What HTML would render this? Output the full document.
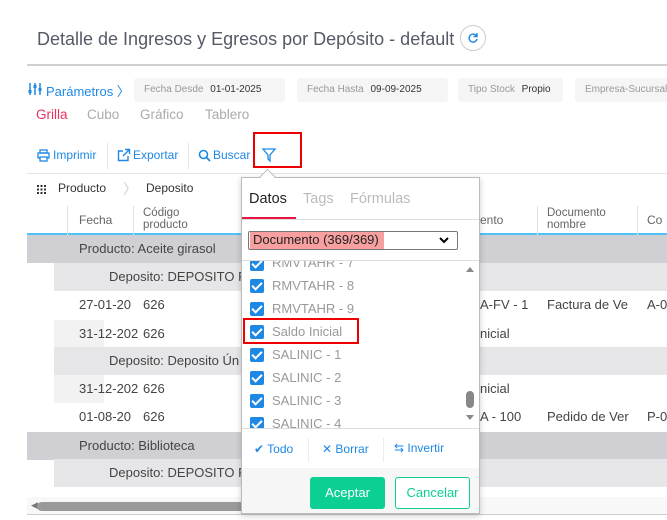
<!DOCTYPE html>
<html><head><meta charset="utf-8"><style>
*{box-sizing:border-box;margin:0;padding:0}
html,body{width:667px;height:520px;overflow:hidden}
body{background:#fff;font-family:"Liberation Sans",sans-serif;position:relative;color:#333}
.a{position:absolute;white-space:nowrap}
.box{position:absolute;background:#f5f5f6;border-radius:3px;top:78px;height:24px;font-size:10px;line-height:24px;padding-left:10px;color:#999;white-space:nowrap;overflow:hidden}
.box b{font-weight:normal;color:#333;margin-left:4px}
.tb{color:#1e88e5;font-size:12px;top:148px}
.row{position:absolute;left:27px;right:0;height:28px;font-size:13px;line-height:28px;color:#444;overflow:hidden}
.cb{position:absolute;left:8px;width:14px;height:14px;background:#1e88e5;border-radius:2px}
.cb:after{content:"";position:absolute;left:4px;top:1px;width:4px;height:8px;border:solid #fff;border-width:0 2px 2px 0;transform:rotate(45deg)}
.it{position:absolute;left:30px;font-size:13px;color:#999}
</style></head><body>
<div class="a" style="left:37px;top:29px;font-size:18px;color:#555a66">Detalle de Ingresos y Egresos por Depósito - default</div>
<div class="a" style="left:460px;top:25px;width:26px;height:26px;border:1px solid #ccc;border-radius:50%"></div>
<svg class="a" style="left:467px;top:32px" width="12" height="12"><path d="M9.5 4A4 4 0 1 0 10 7" fill="none" stroke="#1e88e5" stroke-width="1.4"/><path d="M10 1v3.5H6.5" fill="none" stroke="#1e88e5" stroke-width="1.4"/></svg>
<div class="a" style="left:27px;right:0;top:64px;height:2px;background:#d0d0d4"></div>
<svg class="a" style="left:28px;top:82px" width="14" height="14"><path d="M2 1v12M7 1v12M12 1v12" stroke="#1e88e5" stroke-width="1.5"/><rect x="0.5" y="8" width="3" height="3" fill="#1e88e5"/><rect x="5.5" y="3" width="3" height="3" fill="#1e88e5"/><rect x="10.5" y="6" width="3" height="3" fill="#1e88e5"/></svg>
<div class="a" style="left:46px;top:81px;font-size:13px;color:#1e88e5">Parámetros 〉</div>
<div class="box" style="left:134px;width:151px">Fecha Desde <b>01-01-2025</b></div>
<div class="box" style="left:297px;width:151px">Fecha Hasta <b>09-09-2025</b></div>
<div class="box" style="left:458px;width:105px">Tipo Stock <b>Propio</b></div>
<div class="box" style="left:575px;width:100px">Empresa-Sucursal</div>
<div class="a" style="left:36px;top:107px;font-size:13.5px;color:#e8335f">Grilla</div>
<div class="a" style="left:87px;top:107px;font-size:13.5px;color:#aaa">Cubo</div>
<div class="a" style="left:140px;top:107px;font-size:13.5px;color:#aaa">Gráfico</div>
<div class="a" style="left:205px;top:107px;font-size:13.5px;color:#aaa">Tablero</div>
<svg class="a" style="left:37px;top:149px" width="13" height="13"><rect x="3" y="1" width="7" height="3" fill="none" stroke="#1e88e5" stroke-width="1.3"/><rect x="1" y="4" width="11" height="5" fill="none" stroke="#1e88e5" stroke-width="1.3"/><rect x="3" y="8" width="7" height="4" fill="#fff" stroke="#1e88e5" stroke-width="1.3"/></svg>
<div class="a tb" style="left:53px">Imprimir</div>
<div class="a" style="left:107px;top:143px;width:1px;height:26px;background:#e4e4e4"></div>
<svg class="a" style="left:117px;top:148px" width="14" height="14"><path d="M6 3H1.5v9.5H11V8" fill="none" stroke="#1e88e5" stroke-width="1.4"/><path d="M6 8L12.5 1.5M8 1.5h4.5V6" fill="none" stroke="#1e88e5" stroke-width="1.4"/></svg>
<div class="a tb" style="left:133px">Exportar</div>
<div class="a" style="left:188px;top:143px;width:1px;height:26px;background:#e4e4e4"></div>
<svg class="a" style="left:198px;top:149px" width="13" height="13"><circle cx="5.5" cy="5.5" r="4" fill="none" stroke="#1e88e5" stroke-width="1.6"/><path d="M8.5 8.5L12 12" stroke="#1e88e5" stroke-width="1.8"/></svg>
<div class="a tb" style="left:213px">Buscar</div>
<svg class="a" style="left:261px;top:147px" width="16" height="16"><path d="M2 2h12l-5 6v6l-2-2V8z" fill="none" stroke="#1e88e5" stroke-width="1.3"/></svg>
<div class="a" style="left:253px;top:132px;width:49px;height:36px;border:2px solid #e00"></div>
<div class="a" style="left:27px;right:0;top:173px;height:1px;background:#e4e4e4"></div>
<svg class="a" style="left:37px;top:185px" width="9" height="9"><g fill="#333"><rect x="0" y="0" width="2" height="2"/><rect x="3.5" y="0" width="2" height="2"/><rect x="7" y="0" width="2" height="2"/><rect x="0" y="3.5" width="2" height="2"/><rect x="3.5" y="3.5" width="2" height="2"/><rect x="7" y="3.5" width="2" height="2"/><rect x="0" y="7" width="2" height="2"/><rect x="3.5" y="7" width="2" height="2"/><rect x="7" y="7" width="2" height="2"/></g></svg>
<div class="a" style="left:58px;top:181px;font-size:12px">Producto</div>
<div class="a" style="left:123px;top:179px;font-size:14px;color:#ccc">〉</div>
<div class="a" style="left:146px;top:181px;font-size:12px">Deposito</div>
<div class="a" style="left:27px;right:0;top:206px;height:29px;border-bottom:2px solid #4fc3f7"></div>
<div class="a" style="left:67px;top:206px;width:1px;height:29px;background:#e0e0e0"></div>
<div class="a" style="left:133px;top:206px;width:1px;height:29px;background:#e0e0e0"></div>
<div class="a" style="left:537px;top:206px;width:1px;height:29px;background:#e0e0e0"></div>
<div class="a" style="left:637px;top:206px;width:1px;height:29px;background:#e0e0e0"></div>
<div class="a" style="left:79px;top:213px;font-size:12px;color:#666">Fecha</div>
<div class="a" style="left:143px;top:207px;font-size:11.5px;color:#666;line-height:12px">Código<br>producto</div>
<div class="a" style="left:480px;top:213px;font-size:12px;color:#666">ento</div>
<div class="a" style="left:547px;top:207px;font-size:11.5px;color:#666;line-height:12px">Documento<br>nombre</div>
<div class="a" style="left:647px;top:213px;font-size:12px;color:#666">Co</div>
<div class="row" style="top:235px;background:#d0d0d4"><span style="margin-left:52px">Producto: Aceite girasol</span></div>
<div class="row" style="top:263px"><div style="margin-left:27px;background:#e6e6e8;padding-left:55px;height:28px">Deposito: DEPOSITO P</div></div>
<div class="row" style="top:291px"><span class="a" style="left:52px">27-01-20</span><span class="a" style="left:116px">626</span><span class="a" style="left:453px">A-FV - 1</span><span class="a" style="left:520px">Factura de Ve</span><span class="a" style="left:620px">A-0</span></div>
<div class="row" style="top:320px;background:linear-gradient(90deg,#fff 27px,#f2f2f3 27px,#f2f2f3 77px,#fff 77px)"><span class="a" style="left:52px">31-12-202</span><span class="a" style="left:116px">626</span><span class="a" style="left:453px">nicial</span></div>
<div class="row" style="top:347px"><div style="margin-left:27px;background:#e6e6e8;padding-left:55px;height:28px">Deposito: Deposito Ún</div></div>
<div class="row" style="top:375px;background:linear-gradient(90deg,#fff 27px,#f2f2f3 27px,#f2f2f3 77px,#fff 77px)"><span class="a" style="left:52px">31-12-202</span><span class="a" style="left:116px">626</span><span class="a" style="left:453px">nicial</span></div>
<div class="row" style="top:403px"><span class="a" style="left:52px">01-08-20</span><span class="a" style="left:116px">626</span><span class="a" style="left:453px">A - 100</span><span class="a" style="left:520px">Pedido de Ver</span><span class="a" style="left:620px">P-0</span></div>
<div class="row" style="top:432px;background:#d0d0d4"><span style="margin-left:52px">Producto: Biblioteca</span></div>
<div class="row" style="top:459px"><div style="margin-left:27px;background:#e6e6e8;padding-left:55px;height:28px">Deposito: DEPOSITO P</div></div>
<div class="a" style="left:27px;right:0;top:497px;height:17px;background:#f8f8f8"></div>
<div class="a" style="left:31px;top:500px;font-size:9px;color:#777">◀</div>
<div class="a" style="left:37px;top:502px;width:412px;height:9px;border-radius:5px;background:#999"></div>
<div class="a" style="left:27px;right:0;top:514px;height:1px;background:#ccc"></div>
<div class="a" style="left:241px;top:177px;width:239px;height:337px;background:#fff;border:1px solid #bbb;box-shadow:0 2px 6px rgba(0,0,0,.2)"></div>
<div class="a" style="left:262px;top:171px;width:11px;height:11px;background:#fff;border-left:1px solid #bbb;border-top:1px solid #bbb;transform:rotate(45deg)"></div>
<div class="a" style="left:249px;top:191px;font-size:14.5px;color:#222">Datos</div>
<div class="a" style="left:303px;top:191px;font-size:14.5px;color:#bbb">Tags</div>
<div class="a" style="left:350px;top:191px;font-size:14.5px;color:#bbb">Fórmulas</div>
<div class="a" style="left:242px;top:219px;width:237px;height:1px;background:#ddd"></div>
<div class="a" style="left:242px;top:217px;width:54px;height:2px;background:#e8173f"></div>
<div class="a" style="left:248px;top:231px;width:210px;height:19px;border:1px solid #777;border-radius:2px;background:#fff"></div>
<div class="a" style="left:250px;top:232px;width:134px;height:17px;background:#f8a0a0"></div>
<div class="a" style="left:253px;top:232px;font-size:13px;color:#222">Documento (369/369)</div>
<svg class="a" style="left:439px;top:236px" width="10" height="8"><path d="M1 2l4 4 4-4" fill="none" stroke="#000" stroke-width="2"/></svg>
<div class="a" style="left:242px;top:260px;width:237px;height:1px;background:#ddd"></div>
<div class="a" style="left:242px;top:261px;width:222px;height:167px;overflow:hidden">
<div class="cb" style="top:-4px"></div><div class="it" style="top:-6px">RMVTAHR - 7</div>
<div class="cb" style="top:18px"></div><div class="it" style="top:17px">RMVTAHR - 8</div>
<div class="cb" style="top:41px"></div><div class="it" style="top:40px">RMVTAHR - 9</div>
<div class="cb" style="top:64px"></div><div class="it" style="top:63px">Saldo Inicial</div>
<div class="cb" style="top:87px"></div><div class="it" style="top:86px">SALINIC - 1</div>
<div class="cb" style="top:110px"></div><div class="it" style="top:109px">SALINIC - 2</div>
<div class="cb" style="top:133px"></div><div class="it" style="top:132px">SALINIC - 3</div>
<div class="cb" style="top:156px"></div><div class="it" style="top:155px">SALINIC - 4</div>
</div>
<div class="a" style="left:243px;top:318px;width:116px;height:26px;border:2px solid #e00"></div>
<svg class="a" style="left:466px;top:266px" width="8" height="6"><path d="M0 6L4 1 8 6z" fill="#888"/></svg>
<div class="a" style="left:466px;top:391px;width:8px;height:17px;border-radius:4px;background:#888"></div>
<svg class="a" style="left:466px;top:415px" width="8" height="6"><path d="M0 0L4 5 8 0z" fill="#888"/></svg>
<div class="a" style="left:242px;top:428px;width:237px;height:1px;background:#ddd"></div>
<div class="a" style="left:254px;top:442px;font-size:12px;color:#1e88e5">✔ Todo</div>
<div class="a" style="left:308px;top:438px;width:1px;height:24px;background:#eee"></div>
<div class="a" style="left:322px;top:442px;font-size:12px;color:#1e88e5">✕ Borrar</div>
<div class="a" style="left:383px;top:438px;width:1px;height:24px;background:#eee"></div>
<div class="a" style="left:394px;top:441px;font-size:12px;color:#1e88e5">⇆ Invertir</div>
<div class="a" style="left:242px;top:468px;width:237px;height:45px;background:#f6f6f6"></div>
<div class="a" style="left:310px;top:477px;width:75px;height:32px;background:#0ccf94;border-radius:3px;color:#fff;font-size:13px;text-align:center;line-height:32px">Aceptar</div>
<div class="a" style="left:395px;top:477px;width:75px;height:32px;background:#fff;border:1px solid #0ccf94;border-radius:3px;color:#0ccf94;font-size:13px;text-align:center;line-height:30px">Cancelar</div>
</body></html>
